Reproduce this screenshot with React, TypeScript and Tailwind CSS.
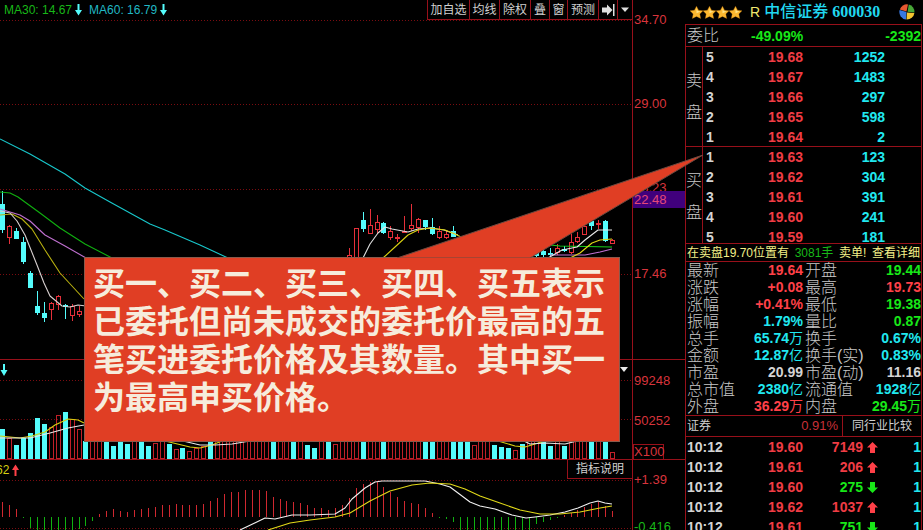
import type { ReactNode } from "react"

type Candle = { i: number; up: boolean; open: number; close: number; high: number; low: number }

const STEP = 6.93
const xAt = (i: number) => Math.round(2.3 + i * STEP)

const CYAN = "#54fcfc"
const RED = "#e6303a"

// [index, u = rising / d = falling, body top, body bottom, wick top, wick bottom]
const candleRows: [number, string, number, number, number, number][] = [
    [0, "d", 204, 230, 191, 233],
    [1, "u", 226, 237, 225, 244],
    [2, "d", 231, 239, 228, 239],
    [3, "d", 242, 262, 237, 264],
    [4, "d", 273, 288, 271, 288],
    [5, "d", 306, 313, 291, 315],
    [6, "d", 313, 318, 302, 322],
    [7, "u", 303, 309, 302, 320],
    [8, "u", 296, 304, 295, 310],
    [9, "d", 305, 307, 304, 319],
    [10, "u", 306, 315, 304, 321],
    [11, "u", 311, 314, 306, 317],
    [50, "u", 255, 260, 248, 260],
    [51, "u", 228, 260, 228, 260],
    [52, "d", 220, 229, 212, 232],
    [53, "u", 225, 233, 209, 233],
    [54, "u", 222, 229, 215, 234],
    [55, "d", 223, 233, 222, 234],
    [56, "u", 231, 237, 226, 240],
    [57, "u", 237, 238, 234, 242],
    [58, "u", 231, 232, 216, 233],
    [59, "u", 225, 228, 204, 231],
    [60, "u", 219, 227, 218, 233],
    [61, "d", 220, 227, 220, 230],
    [62, "d", 227, 234, 218, 235],
    [63, "u", 231, 237, 226, 239],
    [64, "u", 234, 237, 230, 239],
    [65, "d", 231, 237, 226, 237],
    [77, "d", 252, 256, 249, 257],
    [78, "d", 251, 255, 248, 258],
    [79, "d", 253, 255, 248, 256],
    [80, "u", 248, 252, 244, 255],
    [81, "d", 249, 251, 246, 252],
    [82, "u", 242, 252, 234, 254],
    [83, "u", 237, 241, 232, 243],
    [84, "u", 226, 234, 222, 235],
    [85, "d", 221, 226, 219, 230],
    [86, "u", 223, 224, 220, 229],
    [87, "d", 221, 241, 220, 242],
    [88, "u", 240, 243, 239, 244],
]

const candles: Candle[] = candleRows.map(([i, dir, open, close, high, low]) => ({
    i,
    up: dir === "u",
    open,
    close,
    high,
    low,
}))

// Sessions that closed lower get a solid cyan volume bar, the rest a hollow red one
const fallingSessions = new Set([
    0, 2, 3, 4, 5, 6, 9, 12, 15, 16, 17, 18, 20, 21, 24, 26, 30, 39, 42, 44, 45, 47, 52, 55, 61, 62, 65, 66, 67, 71,
    72, 73, 75, 78, 79, 81, 85, 87,
])

const volumeTops: Record<number, number> = {
    0: 429, 1: 438, 2: 445, 3: 438, 4: 433, 5: 418, 6: 424, 7: 427, 8: 415, 9: 412, 10: 419, 11: 429,
    16: 446, 18: 444, 21: 446, 22: 443, 24: 444, 25: 449, 26: 448, 27: 451, 28: 448, 29: 446, 44: 445,
    45: 448, 48: 444, 68: 445, 71: 445, 72: 447, 73: 448, 74: 450, 75: 444, 79: 446, 81: 446, 88: 452,
}

const macdEnds = [
    502, 505, 509, 518, 528, 530, 530, 530, 530, 530, 530, 529, 526, 521, 514, 511, 509, 511, 512, 510, 509, 508,
    507, 505, 505, 504, 505, 505, 505, 504, 501, 498, 494, 492, 492, 490, 490, 490, 491, 497, 499, 501, 502, 503,
    505, 508, 508, 510, 508, 505, 498, 488, 484, 482, 482, 487, 492, 497, 501, 503, 504, 508, 513, 518, 519, 522,
    530, 530, 530, 530, 530, 530, 530, 530, 530, 530, 530, 524, 522, 520, 518, 515, 513, 510, 507, 504, 502, 506,
    511,
]

const asks = [
    ["5", "19.68", "1252"],
    ["4", "19.67", "1483"],
    ["3", "19.66", "297"],
    ["2", "19.65", "598"],
    ["1", "19.64", "2"],
]

const bids = [
    ["1", "19.63", "123"],
    ["2", "19.62", "304"],
    ["3", "19.61", "391"],
    ["4", "19.60", "241"],
    ["5", "19.59", "181"],
]

const up = "text-[#ff4048]"
const down = "text-[#18e818]"
const aqua = "text-[#20e8f0]"
const plain = "text-[#d4d4d4]"

const stats: [string, string, string, string, string, string][] = [
    ["最新", "19.64", up, "开盘", "19.44", down],
    ["涨跌", "+0.08", up, "最高", "19.73", up],
    ["涨幅", "+0.41%", up, "最低", "19.38", down],
    ["振幅", "1.79%", aqua, "量比", "0.87", down],
    ["总手", "65.74万", aqua, "换手", "0.67%", aqua],
    ["金额", "12.87亿", aqua, "换手(实)", "0.83%", aqua],
    ["市盈", "20.99", plain, "市盈(动)", "11.16", plain],
    ["总市值", "2380亿", aqua, "流通值", "1928亿", aqua],
    ["外盘", "36.29万", up, "内盘", "29.45万", down],
]

const ticks: [string, string, string, boolean][] = [
    ["10:12", "19.60", "7149", true],
    ["10:12", "19.61", "206", true],
    ["10:12", "19.60", "275", false],
    ["10:12", "19.62", "1037", true],
    ["10:12", "19.61", "751", false],
]

function Grid({ rows }: { rows: number[] }) {
    return (
        <>
            {rows.map((y) => (
                <line key={y} x1="0" x2="632" y1={y + 0.5} y2={y + 0.5} stroke="#7a0c10" strokeDasharray="1 2" />
            ))}
        </>
    )
}

function Curve({ points, color }: { points: string; color: string }) {
    return <polyline points={points} fill="none" stroke={color} strokeWidth="1.1" strokeLinejoin="round" />
}

function ThinArrow({ up = false, color }: { up?: boolean; color: string }) {
    return (
        <svg width="7" height="12" viewBox="0 0 7 12" className={up ? "rotate-180" : ""} aria-hidden="true">
            <path d="M2.5 0h2v6H7L3.5 11.5 0 6h2.5z" fill={color} />
        </svg>
    )
}

function PriceChart() {
    return (
        <svg className="block h-[339px] w-full" viewBox="0 20 632 339" preserveAspectRatio="none">
            <Grid rows={[20, 104, 189, 274]} />
            <g shapeRendering="crispEdges">
                {candles.map((c) => {
                    const x = xAt(c.i)
                    return (
                        <g key={c.i}>
                            <rect x={x} y={c.high} width="1" height={c.low - c.high} fill={c.up ? RED : CYAN} />
                            {c.up ? (
                                <rect
                                    x={x - 1.5}
                                    y={c.open + 0.5}
                                    width="4"
                                    height={c.close - c.open}
                                    fill="#000"
                                    stroke={RED}
                                />
                            ) : (
                                <rect x={x - 2} y={c.open} width="5" height={c.close - c.open} fill={CYAN} />
                            )}
                        </g>
                    )
                })}
            </g>
            <Curve color="#18c8cc" points="0,139 30,154 65,174 85,188 110,202 150,224 165,230 200,245 228,258" />
            <Curve color="#10b010" points="0,192 10,193 18,197 40,213 60,228 85,244 112,258" />
            <Curve color="#c070d0" points="0,209 20,215 30,221 45,235 65,246 86,258" />
            <Curve color="#b8b010" points="0,215 12,214 22,219 32,229 45,250 60,273 84,299" />
            <Curve color="#d8d0d0" points="0,211 10,213 17,221 25,235 37,265 44,283 50,296 62,306 70,307 78,305 86,306" />
            <Curve color="#e0e0e0" points="363,258 370,244 378,233 385,227 392,229 408,232 418,229 430,228 444,230 458,235" />
            <Curve color="#d8d010" points="383,258 395,247 408,235 418,230 430,228 445,230 455,234 463,238" />
            <Curve color="#18d018" points="540,244 560,246 612,247" />
            <Curve color="#c070d0" points="550,255 585,255 600,252 612,249" />
            <Curve color="#e0d818" points="570,258 580,253 592,243 600,240 612,239" />
            <Curve color="#e8e8e8" points="548,258 562,250 577,247 585,240 598,230 612,230" />
        </svg>
    )
}

function VolumeChart() {
    return (
        <svg className="block h-[99px] w-full" viewBox="0 360 632 99" preserveAspectRatio="none">
            <Grid rows={[380, 419]} />
            <path d="M3 364h2v6h2.500L4 376 .5 370H3z" fill={CYAN} />
            <path d="M620 367h8l-4 5z" fill="#e8e8e8" />
            <g shapeRendering="crispEdges">
                {macdEnds.map((_, i) => {
                    const x = xAt(i)
                    const top = volumeTops[i] ?? 441
                    return fallingSessions.has(i) ? (
                        <rect key={i} x={x - 2} y={top} width="5" height={459 - top} fill={CYAN} />
                    ) : (
                        <rect key={i} x={x - 1.5} y={top + 0.5} width="4" height={458 - top} fill="none" stroke="#c02028" />
                    )
                })}
            </g>
            <Curve color="#d8d010" points="0,436 20,438 32,436 45,432 55,425 68,419 78,420 84,423" />
            <Curve color="#e8e8e8" points="0,438 30,438 50,433 68,428 84,425" />
            <Curve color="#d8d010" points="165,441 190,447 200,448 212,445 222,441" />
            <Curve color="#e8e8e8" points="183,441 200,445 215,445 232,444 250,441" />
            <Curve color="#d8d010" points="498,441 515,446 525,447 535,444 545,441" />
            <Curve color="#e8e8e8" points="524,441 530,444 545,443 565,444 577,441" />
        </svg>
    )
}

function MacdChart() {
    return (
        <svg className="block h-[51px] w-full" viewBox="0 479 632 51" preserveAspectRatio="none">
            <Grid rows={[480, 528]} />
            <g shapeRendering="crispEdges">
                {macdEnds.map((end, i) => (
                    <rect
                        key={i}
                        x={xAt(i)}
                        y={Math.min(end, 517)}
                        width="1"
                        height={Math.abs(end - 517)}
                        fill={end < 517 ? "#d02830" : "#10b010"}
                    />
                ))}
            </g>
            <Curve
                color="#f0f0f0"
                points="240,530 265,518 275,519 292,515 310,515 335,514 345,508 352,499 365,488 375,482 382,481 425,481 440,484 450,487 458,493 470,502 480,506 495,509 512,515 526,518 535,517 550,515 565,512 578,508 590,503 598,501 605,503 612,504"
            />
            <Curve
                color="#e0d818"
                points="268,530 290,523 310,520 335,517 350,513 370,501 390,491 412,485 430,483 450,484 465,489 480,496 500,503 520,510 540,514 560,514 580,512 600,508 612,506"
            />
        </svg>
    )
}

function ToolButton({ children, label, className }: { children: ReactNode; label?: string; className: string }) {
    return (
        <button
            type="button"
            aria-label={label}
            className={`flex h-5 items-center justify-center border-b border-l border-[#98101a] whitespace-nowrap ${className}`}
        >
            {children}
        </button>
    )
}

function Toolbar() {
    return (
        <header className="flex h-5 items-center justify-between pl-1 text-xs">
            <div className="flex items-center gap-[3px] whitespace-nowrap">
                <span className="text-[#18b818]">MA30: 14.67</span>
                <ThinArrow color={CYAN} />
                <span className="ml-1 text-[#20b8c4]">MA60: 16.79</span>
                <ThinArrow color={CYAN} />
            </div>
            <nav className="flex text-[#d0d0d0]">
                <ToolButton className="w-[42px]">加自选</ToolButton>
                <ToolButton className="w-[30px]">均线</ToolButton>
                <ToolButton className="w-[31px]">除权</ToolButton>
                <ToolButton className="w-[19px]">叠</ToolButton>
                <ToolButton className="w-[18px]">窗</ToolButton>
                <ToolButton className="w-[31px]">预测</ToolButton>
                <ToolButton label="下一个" className="w-[19px]">
                    <svg width="13" height="12" viewBox="0 0 13 12" fill="#e0e0e0">
                        <path d="M0 3.500h5V.5L10.500 6 5 11.500v-3H0zM11 0h1.500v12H11z" />
                    </svg>
                </ToolButton>
                <ToolButton label="更多" className="w-[15px]">
                    <svg width="8" height="5" viewBox="0 0 8 5" fill="#e0e0e0">
                        <path d="M0 .5h8L4 5z" />
                    </svg>
                </ToolButton>
            </nav>
        </header>
    )
}

function PriceAxis() {
    return (
        <aside className="w-[53px] shrink-0 border-l border-[#98101a] text-[13px] leading-5 text-[#d8343c]">
            <div className="h-[360px] border-b border-[#98101a] pt-[10px]">
                <p className="pl-px">34.70</p>
                <p className="mt-16 pl-px">29.00</p>
                <p className="mt-16 h-[13px] overflow-hidden pl-px">23.23</p>
                <p className="h-[17px] bg-[#40007c] pl-px leading-[17px] text-[#e44878]">22.48</p>
                <p className="mt-14 pl-px">17.46</p>
            </div>
            <div className="h-[100px] border-b border-[#98101a] pt-[11px]">
                <p className="pl-px">99248</p>
                <p className="mt-5 pl-px">50252</p>
                <p className="mt-[13px] w-[31px] border border-b-0 border-[#98101a] leading-[14px]">X100</p>
            </div>
            <p className="mt-[10px] pl-px">+1.39</p>
            <p className="mt-[27px] pl-px text-[#18b818]">-0.416</p>
        </aside>
    )
}

function Callout() {
    return (
        <div className="absolute top-[155px] left-[84px] w-[620px]">
            <svg className="block h-[103px] w-full" viewBox="84 155 620 103">
                <path d="M397 258 703 155 530 258z" fill="#e03e24" stroke="#6e4a40" strokeWidth="1" />
            </svg>
            <p className="-mt-px w-[536px] border border-[#8a5a4c] bg-[#e03e24] pt-[7px] pr-2 pb-6 pl-2 text-[32px] leading-[38px] font-bold text-[#f6ecdc]">
                买一、买二、买三、买四、买五表示已委托但尚未成交的委托价最高的五笔买进委托价格及其数量。其中买一为最高申买价格。
            </p>
        </div>
    )
}

function Star() {
    return (
        <svg width="13" height="13" viewBox="0 0 13 13" aria-hidden="true">
            <path
                d="M6.500 .2 8.600 4.200 13 4.800 9.800 7.900 10.700 12.600 6.500 10.400 2.300 12.600 3.200 7.900 0 4.800 4.400 4.200z"
                fill="#fcb830"
                stroke="#c87808"
                strokeWidth=".3"
            />
            <path d="M6.500 2 7.700 5.100 10.600 5.500 6.500 7.300z" fill="#ffe48a" />
        </svg>
    )
}

function PieLogo() {
    return (
        <svg width="16" height="16" viewBox="0 0 16 16" aria-hidden="true">
            <path d="M7.500 7.500 9 .4A7.600 7.600 0 0 0 .8 5.500z" fill="#e85830" />
            <path d="M7.500 8 .6 6A7.600 7.600 0 0 0 7 15.500z" fill="#3878e0" />
            <path d="M8 8.500 7.500 15.600A7.600 7.600 0 0 0 15.400 9z" fill="#f4c430" />
            <path d="M8.500 7.800 15.500 8.500A7.600 7.600 0 0 0 9.800 .6z" fill="#48a838" />
        </svg>
    )
}

function OrderBook({ title, rows }: { title: string; rows: string[][] }) {
    return (
        <div className="flex h-full">
            <div className="flex w-[17px] shrink-0 flex-col items-center gap-3 border-r border-[#98101a] pt-6 text-base leading-5 font-light text-[#c8c8c8]">
                {title.split("").map((ch) => (
                    <span key={ch}>{ch}</span>
                ))}
            </div>
            <table className="h-[100px] flex-1 table-fixed text-sm leading-5 font-bold">
                <tbody>
                    {rows.map(([level, price, qty]) => (
                        <tr key={level} className="h-5">
                            <th scope="row" className="w-10 p-0 pl-[3px] text-left text-[#d4d4d4]">{level}</th>
                            <td className="p-0 text-right text-[#f03c44]">{price}</td>
                            <td className="w-[82px] p-0 text-right text-[#20e8f0]">{qty}</td>
                            <td className="w-9 p-0" />
                        </tr>
                    ))}
                </tbody>
            </table>
        </div>
    )
}

function StatValue({ value }: { value: string }) {
    const unit = value.match(/[万亿]$/)?.[0]
    return unit ? (
        <>
            {value.slice(0, -1)}
            <span className="font-normal">{unit}</span>
        </>
    ) : (
        <>{value}</>
    )
}

function TradeArrow({ rising }: { rising: boolean }) {
    return (
        <svg width="11" height="11" viewBox="0 0 11 11" className="block">
            <path
                d={rising ? "M5.500 0 11 5.500H8V11H3V5.500H0z" : "M5.500 11 0 5.500H3V0H8V5.500H11z"}
                fill={rising ? "#ff4048" : "#18e818"}
            />
        </svg>
    )
}

function QuotePanel() {
    return (
        <aside className="mr-px w-[237px] shrink-0">
            <div className="flex h-6 items-center pr-[7px] pl-[5px]">
                <div className="flex">
                    {[0, 1, 2, 3].map((n) => (
                        <Star key={n} />
                    ))}
                </div>
                <span className="ml-2 text-sm text-[#f0e870]">R</span>
                <h1 className="ml-1 flex items-center gap-1 text-base whitespace-nowrap text-[#20d8f0]">
                    <span className="font-medium">中信证券</span>
                    <span className="font-['Liberation_Serif',serif] font-bold">600030</span>
                </h1>
                <span className="ml-auto">
                    <PieLogo />
                </span>
            </div>

            <div className="border border-b-0 border-[#98101a]">
                <div className="flex h-[22px] items-center border-b border-[#98101a] text-sm font-bold text-[#18e818]">
                    <span className="w-[65px] pl-px text-base font-light text-[#c8c8c8]">委比</span>
                    <span>-49.09%</span>
                    <span className="ml-auto">-2392</span>
                </div>

                <div className="h-[100px] border-b border-[#98101a]">
                    <OrderBook title="卖盘" rows={asks} />
                </div>
                <div className="h-[97px] border-b border-[#98101a]">
                    <OrderBook title="买盘" rows={bids} />
                </div>

                <div className="flex h-[18px] items-center justify-between border-b border-[#98101a] px-px text-xs whitespace-nowrap text-[#f4f088]">
                    <span>在卖盘19.70位置有</span>
                    <span className="text-[#18b818]">3081手</span>
                    <span>卖单!</span>
                    <a href="#detail">查看详细</a>
                </div>

                <table className="w-full table-fixed text-sm leading-[17px]">
                    <tbody>
                        {stats.map(([nameA, valueA, toneA, nameB, valueB, toneB]) => (
                            <tr key={nameA} className="h-[17px] whitespace-nowrap">
                                <th scope="row" className="w-12 p-0 pl-px text-left text-base leading-[17px] font-light text-[#c8c8c8]">
                                    {nameA}
                                </th>
                                <td className={`w-[69px] p-0 text-right font-bold ${toneA}`}>
                                    <StatValue value={valueA} />
                                </td>
                                <th scope="row" className="w-[60px] p-0 pl-[2px] text-left text-base leading-[17px] font-light text-[#c8c8c8]">
                                    {nameB}
                                </th>
                                <td className={`p-0 text-right font-bold ${toneB}`}>
                                    <StatValue value={valueB} />
                                </td>
                            </tr>
                        ))}
                    </tbody>
                </table>

                <div className="flex h-[22px] items-center border-y border-[#98101a] text-xs text-[#d0d0d0]">
                    <span className="pl-px">证券</span>
                    <span className="ml-auto pr-1 text-[13px] text-[#c83038]">0.91%</span>
                    <button type="button" className="h-full w-[79px] border-l border-[#98101a]">
                        同行业比较
                    </button>
                </div>

                <table className="w-full table-fixed text-sm leading-5 font-bold">
                    <tbody>
                        {ticks.map(([time, price, qty, rising], i) => (
                            <tr key={i} className="h-5">
                                <td className="w-12 p-0 pl-px text-[#d4d4d4]">{time}</td>
                                <td className="w-[69px] p-0 text-right text-[#f03c44]">{price}</td>
                                <td className={`w-[60px] p-0 text-right ${rising ? "text-[#f03c44]" : "text-[#18e818]"}`}>{qty}</td>
                                <td className="p-0 pl-1 align-middle leading-none">
                                    <TradeArrow rising={rising} />
                                </td>
                                <td className="w-5 p-0 text-right text-[#20e8f0]">1</td>
                            </tr>
                        ))}
                    </tbody>
                </table>
            </div>
        </aside>
    )
}

export default function App() {
    return (
        <main className="relative flex h-screen overflow-hidden bg-black font-['Liberation_Sans','Noto_Sans_CJK_SC',sans-serif]">
            <section className="min-w-0 flex-1">
                <Toolbar />
                <div className="border-b border-[#98101a]">
                    <PriceChart />
                </div>
                <div className="border-b border-[#98101a]">
                    <VolumeChart />
                </div>
                <div className="flex h-[19px] items-center justify-between text-xs">
                    <span className="-ml-1 flex items-center gap-[3px] text-[#d8d010]">
                        62
                        <ThinArrow up color="#ff4048" />
                    </span>
                    <button type="button" className="h-full w-[65px] border-b border-l border-[#98101a] text-[#d0d0d0]">
                        指标说明
                    </button>
                </div>
                <MacdChart />
            </section>
            <PriceAxis />
            <QuotePanel />
            <Callout />
        </main>
    )
}
